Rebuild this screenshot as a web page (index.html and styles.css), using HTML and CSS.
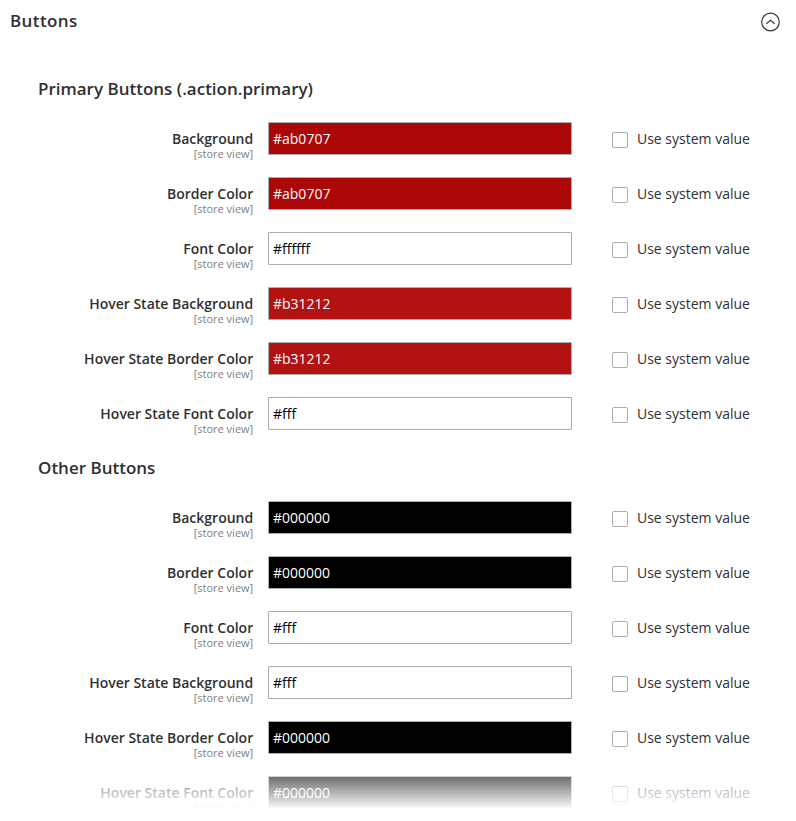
FILE: index.html
```html
<!DOCTYPE html>
<html lang="en">
<head>
<meta charset="utf-8">
<title>Buttons</title>
<link rel="stylesheet" href="styles.css">
</head>
<body>
<main class="panel">
<header class="panel-head">
<h1>Buttons</h1>
<svg class="toggle" width="20" height="20" viewBox="0 0 20 20"><circle cx="10.5" cy="10" r="8.8"/><path d="M6.3 11.8 10.5 8.3l4.2 3.5"/></svg>
</header>
<div id="groups"></div>
<div class="fade"></div>
</main>
<script src="script.js"></script>
</body>
</html>
```
FILE: styles.css
```css
* { box-sizing: border-box; }
body { margin: 0; background: #fff; color: #303030; font: 14px/19px "Open Sans", sans-serif; }
.panel { position: relative; height: 821px; overflow: hidden; }
.panel-head { display: flex; justify-content: space-between; height: 79px; padding: 9px 16px 0 10px; }
h1, h2 { margin: 0; font-size: 17px; line-height: 24px; font-weight: 600; }
h1 { letter-spacing: .4px; }
.toggle { margin-top: 3px; fill: none; stroke: #41362f; stroke-width: 1.2; }
.group { height: 379px; }
h2 { height: 43px; padding-left: 38px; line-height: 20px; }
.row { display: grid; grid-template-columns: 253.2px 304px 1fr; column-gap: 14.8px; height: 55px; }
.label { padding-top: 7px; text-align: right; font-weight: 600; }
.scope { display: block; font-size: 11px; line-height: 12px; font-weight: 400; color: #808080; }
.value { width: 304px; height: 33px; padding: 0 4px; border: 1px solid #adadad; border-radius: 1px; font: inherit; }
.inherit { display: flex; align-items: flex-start; gap: 9px; padding: 7px 0 0 25.2px; }
.check { width: 16px; height: 16px; margin-top: 3px; border: 1px solid #adadad; border-radius: 2px; }
.fade { position: absolute; left: 0; right: 0; top: 776px; height: 45px; background: linear-gradient(rgba(255,255,255,.42), rgba(255,255,255,.97) 32px, #fff 32px); }
```
FILE: script.js
```js
const labels = ["Background", "Border Color", "Font Color", "Hover State Background", "Hover State Border Color", "Hover State Font Color"];
const groups = [
  ["Primary Buttons (.action.primary)", ["#ab0707", "#ab0707", "#ffffff", "#b31212", "#b31212", "#fff"]],
  ["Other Buttons", ["#000000", "#000000", "#fff", "#fff", "#000000", "#000000"]]
];
document.getElementById("groups").innerHTML = groups.map(([title, values]) =>
  `<section class="group"><h2>${title}</h2>` + values.map((v, i) =>
    `<div class="row"><div class="label">${labels[i]}<span class="scope">[store view]</span></div>
    <input class="value" value="${v}" style="background:${v};color:${v.startsWith("#fff") ? "#000" : "#fff"}">
    <label class="inherit"><span class="check"></span>Use system value</label></div>`).join("") + `</section>`).join("");
```
